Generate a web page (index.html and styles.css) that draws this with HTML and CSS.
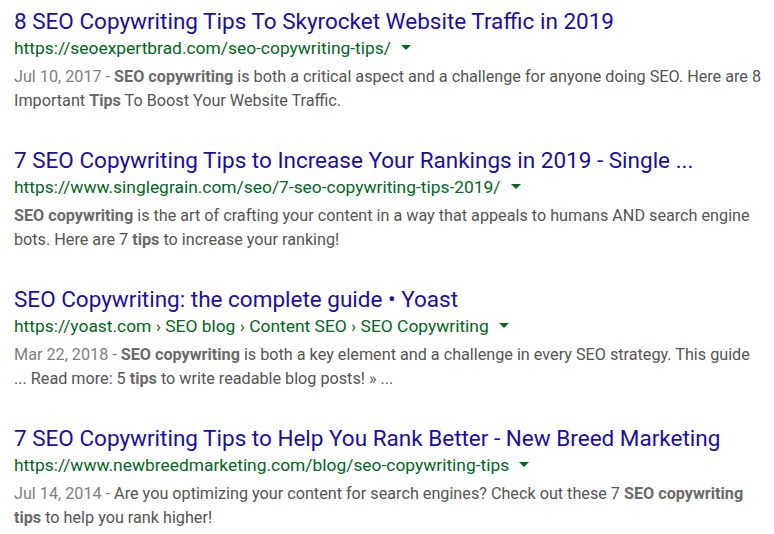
FILE: index.html
```html
<!DOCTYPE html>
<html>
<head>
<meta charset="utf-8">
<link rel="stylesheet" href="styles.css">
</head>
<body>
<div class="results">
  <div class="result">
    <a class="title">8 SEO Copywriting Tips To Skyrocket Website Traffic in 2019</a>
    <div class="url">https://seoexpertbrad.com/seo-copywriting-tips/<span class="arrow"></span></div>
    <div class="snippet"><span class="date">Jul 10, 2017 - </span><b>SEO copywriting</b> is both a critical aspect and a challenge for anyone doing SEO. Here are 8 Important <b>Tips</b> To Boost Your Website Traffic.</div>
  </div>
  <div class="result">
    <a class="title">7 SEO Copywriting Tips to Increase Your Rankings in 2019 - Single ...</a>
    <div class="url">https://www.singlegrain.com/seo/7-seo-copywriting-tips-2019/<span class="arrow"></span></div>
    <div class="snippet"><b>SEO copywriting</b> is the art of crafting your content in a way that appeals to humans AND search engine bots. Here are 7 <b>tips</b> to increase your ranking!</div>
  </div>
  <div class="result">
    <a class="title">SEO Copywriting: the complete guide • Yoast</a>
    <div class="url">https://yoast.com › SEO blog › Content SEO › SEO Copywriting<span class="arrow"></span></div>
    <div class="snippet"><span class="date">Mar 22, 2018 - </span><b>SEO copywriting</b> is both a key element and a challenge in every SEO strategy. This guide ... Read more: 5 <b>tips</b> to write readable blog posts! » ...</div>
  </div>
  <div class="result">
    <a class="title">7 SEO Copywriting Tips to Help You Rank Better - New Breed Marketing</a>
    <div class="url">https://www.newbreedmarketing.com/blog/seo-copywriting-tips<span class="arrow"></span></div>
    <div class="snippet"><span class="date">Jul 14, 2014 - </span>Are you optimizing your content for search engines? Check out these 7 <b>SEO copywriting tips</b> to help you rank higher!</div>
  </div>
</div>
</body>
</html>
```
FILE: styles.css
```css
html, body {
  margin: 0;
  padding: 0;
  background: #fff;
}
body {
  font-family: Roboto, "Liberation Sans", Arial, sans-serif;
}
.results {
  display: flex;
  flex-direction: column;
  gap: 33px;
  padding: 7px 8px 0 14px;
}
.result {
  display: flex;
  flex-direction: column;
}
.title {
  display: block;
  font-size: 22.5px;
  line-height: 28px;
  color: #1a0dab;
  white-space: nowrap;
}
.url {
  margin-top: 1px;
  font-size: 17.4px;
  line-height: 24px;
  color: #006621;
  white-space: nowrap;
}
.arrow {
  display: inline-block;
  width: 0;
  height: 0;
  border-left: 5px solid transparent;
  border-right: 5px solid transparent;
  border-top: 5px solid #006621;
  margin-left: 10px;
  vertical-align: 4px;
}
.snippet {
  margin-top: 5px;
  font-size: 16.2px;
  line-height: 24px;
  color: #545454;
}
.snippet b {
  font-weight: bold;
  color: #6a6a6a;
}
.date {
  color: #808080;
}
```
